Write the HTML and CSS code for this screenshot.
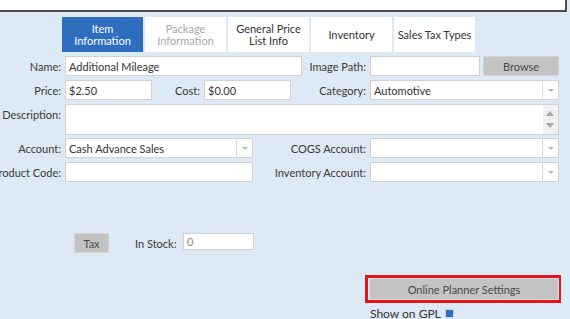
FILE: index.html
```html
<!DOCTYPE html>
<html>
<head>
<meta charset="utf-8">
<link rel="stylesheet" href="styles.css">
</head>
<body>
<div class="topbar"></div>
<div class="tabs">
  <div class="tab active">Item<br>Information</div>
  <div class="tab disabled">Package<br>Information</div>
  <div class="tab">General Price<br>List Info</div>
  <div class="tab">Inventory</div>
  <div class="tab">Sales Tax Types</div>
</div>
<div class="form">
  <div class="row">
    <div class="lbl">Name:</div>
    <div class="field w-name">Additional Mileage</div>
    <div class="lbl lbl-r1">Image Path:</div>
    <div class="field w-path"></div>
    <div class="btn browse">Browse</div>
  </div>
  <div class="row">
    <div class="lbl">Price:</div>
    <div class="field w-price">$2.50</div>
    <div class="lbl lbl-cost">Cost:</div>
    <div class="field w-price">$0.00</div>
    <div class="lbl lbl-r2">Category:</div>
    <div class="field select w-sel">Automotive<span class="arrow"></span></div>
  </div>
  <div class="row row-desc">
    <div class="lbl lbl-top">Description:</div>
    <div class="field w-desc"><span class="scroll"><span class="up"></span><span class="down"></span></span></div>
  </div>
  <div class="row">
    <div class="lbl">Account:</div>
    <div class="field select w-acc">Cash Advance Sales<span class="arrow"></span></div>
    <div class="lbl lbl-r3">COGS Account:</div>
    <div class="field select w-sel"><span class="arrow"></span></div>
  </div>
  <div class="row">
    <div class="lbl">Product Code:</div>
    <div class="field w-acc"></div>
    <div class="lbl lbl-r3">Inventory Account:</div>
    <div class="field select w-sel"><span class="arrow"></span></div>
  </div>
  <div class="row row-tax">
    <div class="btn tax">Tax</div>
    <div class="stock-lbl">In Stock:</div>
    <div class="field stock">0</div>
  </div>
  <div class="planner-wrap">
    <div class="planner"><div class="btn planner-btn">Online Planner Settings</div></div>
  </div>
  <div class="gpl">Show on GPL <span class="check"></span></div>
</div>
</body>
</html>
```
FILE: styles.css
```css
* { box-sizing: border-box; }
html, body { margin: 0; padding: 0; }
body {
  width: 570px;
  height: 319px;
  overflow: hidden;
  background: #dde9f5;
  font-family: "Lato", "Liberation Sans", sans-serif;
  font-size: 11px;
  color: #3a3a3a;
}
.topbar {
  width: 567px;
  height: 12px;
  background: #fff;
  border-right: 2px solid #4d4d4d;
  border-bottom: 2px solid #4d4d4d;
}
.tabs {
  display: flex;
  gap: 2px;
  margin: 5px 0 0 62px;
}
.tab {
  width: 81px;
  height: 35px;
  background: #fff;
  display: flex;
  align-items: center;
  justify-content: center;
  text-align: center;
  line-height: 12px;
  color: #333;
}
.tab.active { background: #2d6fbe; color: #fff; }
.tab.disabled { color: #aaa; }
.form { margin-top: 4px; }
.row {
  display: flex;
  align-items: center;
  height: 20px;
  margin-bottom: 4px;
}
.lbl {
  width: 61px;
  margin-right: 4px;
  display: flex;
  justify-content: flex-end;
  white-space: nowrap;
  flex-shrink: 0;
}
.lbl-r1 { width: 64px; }
.lbl-cost { width: 48px; }
.lbl-r2 { width: 75px; }
.lbl-r3 { width: 113px; }
.field {
  position: relative;
  height: 20px;
  background: #fff;
  border: 1px solid #cfd2d6;
  padding: 0 3px;
  display: flex;
  align-items: center;
  flex-shrink: 0;
  white-space: nowrap;
  color: #333;
}
.w-name { width: 237px; }
.w-path { width: 110px; }
.w-price { width: 87px; }
.w-sel { width: 189px; }
.w-acc { width: 188px; }
.w-desc { width: 494px; height: 31px; }
.row-desc { height: 31px; margin-bottom: 3px; align-items: flex-start; }
.lbl-top { padding-top: 4px; }
.select .arrow {
  position: absolute;
  right: 0;
  top: 0;
  bottom: 0;
  width: 16px;
  border-left: 1px solid #dcdcdc;
}
.select .arrow::after {
  content: "";
  position: absolute;
  left: 5px;
  top: 8px;
  border-left: 3px solid transparent;
  border-right: 3px solid transparent;
  border-top: 3px solid #b5b5b5;
}
.scroll {
  position: absolute;
  right: 0;
  top: 0;
  bottom: 0;
  width: 15px;
  background: #f0f0f0;
}
.scroll .up, .scroll .down {
  position: absolute;
  left: 3px;
  border-left: 4px solid transparent;
  border-right: 4px solid transparent;
}
.scroll .up { top: 6px; border-bottom: 5px solid #a8a8a8; }
.scroll .down { bottom: 6px; border-top: 5px solid #a8a8a8; }
.btn {
  background: #c3c3c3;
  border: 1px solid #d4d4d4;
  display: flex;
  align-items: center;
  justify-content: center;
  color: #4a4a4a;
  flex-shrink: 0;
}
.browse { width: 76px; height: 20px; margin-left: 3px; }
.row-tax { margin-top: 51px; height: 20px; align-items: flex-start; }
.tax { width: 35px; height: 20px; margin-left: 74px; }
.stock-lbl { margin-left: 26px; padding-top: 4px; width: 48px; }
.stock { width: 71px; height: 17px; color: #888; align-items: flex-start; padding-top: 1px; }
.planner-wrap { display: flex; margin-top: 22px; padding-left: 365px; }
.planner {
  width: 196px;
  height: 28px;
  border: 3px solid #e3141b;
  padding: 0 0 0 1px;
}
.planner-btn { width: 190px; height: 22px; border-color: #e0e0e0; }
.gpl {
  margin: 3px 0 0 370px;
  display: flex;
  align-items: center;
  gap: 4px;
  color: #333;
  font-size: 12px;
}
.check {
  width: 9px;
  height: 9px;
  background: #2d6fbe;
  border: 1px solid #c7d7ea;
  display: inline-block;
}
```
